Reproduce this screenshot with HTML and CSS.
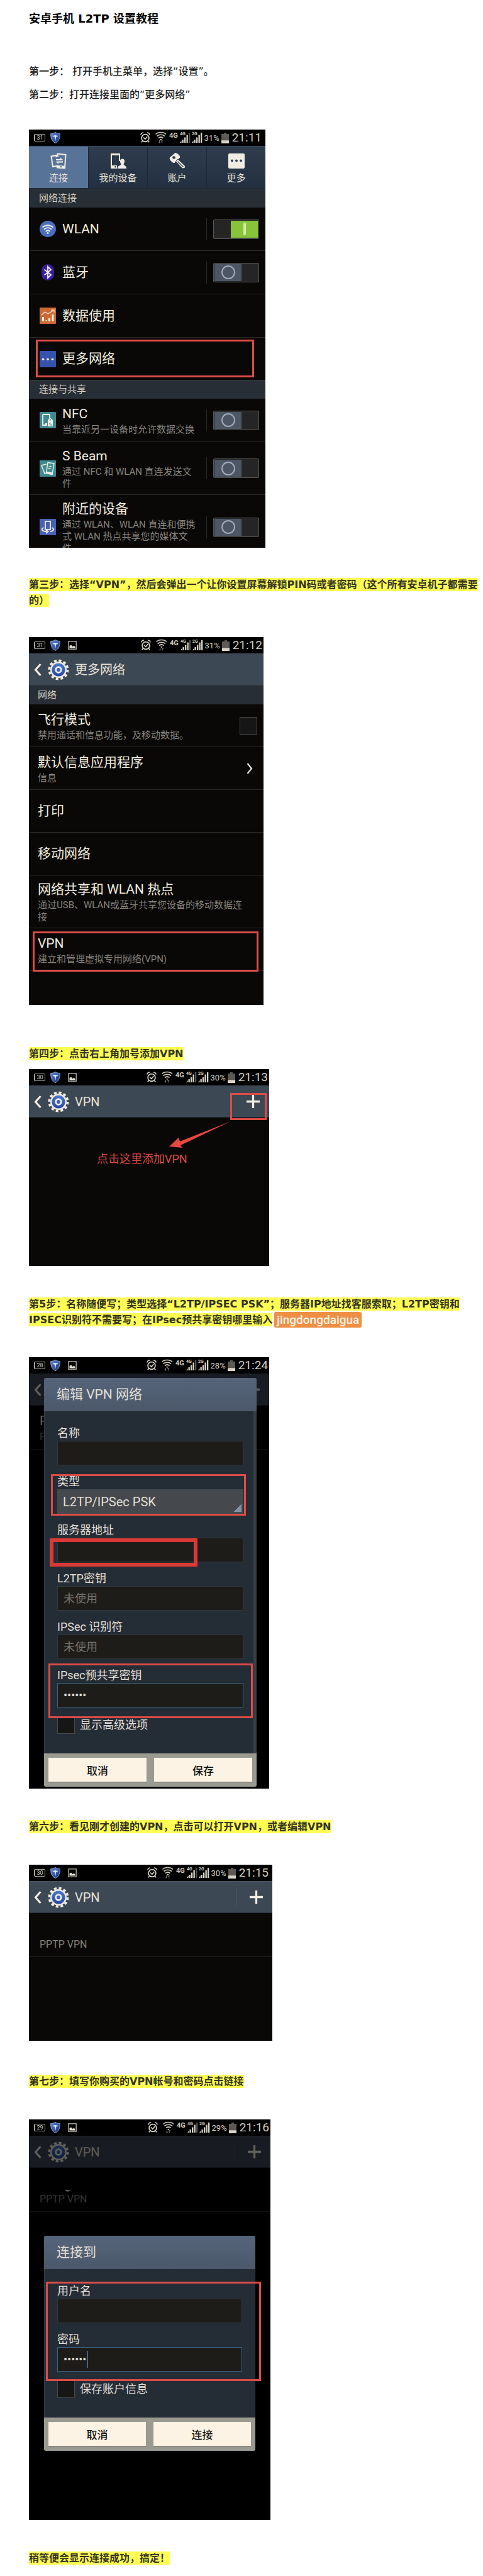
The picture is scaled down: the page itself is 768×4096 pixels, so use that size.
FILE: index.html
```html
<!DOCTYPE html>
<html lang="zh-CN">
<head>
<meta charset="utf-8">
<meta name="viewport" content="width=device-width, initial-scale=1">
<title>安卓手机 L2TP 设置教程</title>
<link rel="stylesheet" href="styles.css">
</head>
<body>
<svg class="sprite" aria-hidden="true">
  <defs>
    <linearGradient id="g-shield" x1="0" y1="0" x2="1" y2="1"><stop offset="0" stop-color="#5a86d6"/><stop offset="1" stop-color="#16307c"/></linearGradient>
    <linearGradient id="g-gear" x1="0" y1="0" x2="0" y2="1"><stop offset="0" stop-color="#4c78cc"/><stop offset="1" stop-color="#2547a4"/></linearGradient>
  </defs>
  <symbol id="i-shield" viewBox="0 0 16 18"><path d="M8 .5C5.500 2 3 2.500.7 2.500.5 9 2 14.500 8 17.500 14 14.500 15.500 9 15.300 2.500 13 2.500 10.500 2 8 .5z" fill="url(#g-shield)" stroke="#93a5c8"/><path d="M3.500 5.500c2 .8 2.500-.5 4.500-.5s2.500 1.300 4.500.5c-.6 2-2 2-3.300 1.900L8 14.500 6.800 7.400C5.500 7.500 4.100 7.500 3.500 5.500z" fill="#dfe6f2"/></symbol>
  <symbol id="i-pic" viewBox="0 0 14 14"><rect x=".8" y=".8" width="12.400" height="12.400" fill="none" stroke="#b9b5ab" stroke-width="1.300"/><path d="M2.500 11.500V8l2.500-1.500L7.500 9l2-1.200 2 1.500v2.200z" fill="#e6e1d6"/></symbol>
  <symbol id="i-radio" viewBox="0 0 101 26">
    <g fill="none" stroke="#d9d4c8" stroke-width="1.700"><circle cx="8" cy="13.500" r="5.900"/><path d="M1 8.500C1 6.500 3 5 5 5M15 8.500C15 6.500 13 5 11 5M3.500 18.200L1.800 20.300M12.500 18.200l1.700 2.100M5 12.500l2.800 2.800 3.400-4"/></g>
    <g fill="none" stroke="#cfcabf" stroke-width="1.700"><path d="M24.500 7.500C28.500 3.500 37 3.500 41 7.500M26.500 10.500C30 7.500 35.500 7.500 39 10.500M29 13.500c2.500-2 5-2 7.500 0"/></g>
    <path d="M31 15h3.500L32.700 17.500z" fill="#cfcabf"/><path d="M30.500 17v4M29 19.500l1.500 1.800 1.500-1.800M34.700 21.500v-4M33.200 18.800l1.500-1.800 1.500 1.800" fill="none" stroke="#77746e"/>
    <g fill="#d9d4c8"><path d="M63 21l2.500-3.500V21zM66.500 16h2.300v5h-2.300zM70 12.500h2.300V21H70zM73.500 8.500h2.300V21h-2.300z"/><path d="M82 21l2.500-3.500V21zM85.500 16h2.300v5h-2.300zM89 12.500h2.300V21H89zM92.500 8.500h2.300V21h-2.300zM96 5h2.300v16H96z"/></g><path d="M77 5h2.300v16H77z" fill="#55534f"/>
  </symbol>
  <symbol id="i-batt" viewBox="0 0 12 17"><path d="M4 0h4v2h4v15H0V2h4z" fill="#5d5a55"/><path d="M0 12.300h12V17H0z" fill="#d9d4c8"/></symbol>
  <symbol id="i-back" viewBox="0 0 12 20"><path d="M10.500 1L2.500 10l8 9" fill="none" stroke="#f4efe4" stroke-width="3"/></symbol>
  <symbol id="i-next" viewBox="0 0 10 18"><path d="M1.500 1L8 9l-6.500 8" fill="none" stroke="#eae5da" stroke-width="2.200"/></symbol>
  <symbol id="i-plus" viewBox="0 0 24 24"><path d="M12 1v22M1 12h22" stroke="#f4efe4" stroke-width="3.400"/></symbol>
  <symbol id="i-gear" viewBox="-17 -17 34 34"><circle r="14.700" fill="none" stroke="#f1ede2" stroke-width="3.600" stroke-dasharray="4.200 3.497"/><circle r="13" fill="#f1ede2"/><circle r="10.600" fill="url(#g-gear)"/><circle r="4.300" fill="none" stroke="#f1ede2" stroke-width="2.800"/></symbol>
  <symbol id="t-conn" viewBox="0 0 26 26"><g fill="none" stroke="#f1ede2" stroke-width="2"><path d="M9 4L1.500 5.500 4 22l6-1"/><path d="M10 7l1.500-5.500L24.500 3 23 24.500 11 23.500l-.5-4"/></g><path d="M8 3.500h5V6H8zM11 20l12 .7-.3 4L11 24z" fill="#f1ede2"/><circle cx="17" cy="22.300" r="1.200" fill="#58749a"/><path d="M9 10h7V7.500l4.500 4-4.500.5H9zM20 15.500h-7V18l-4.500-4 4.500-.5h7z" fill="#f1ede2"/></symbol>
  <symbol id="t-dev" viewBox="0 0 26 26"><path d="M1 1h15v12h-2V4H3v16h8v5H1z" fill="#f1ede2"/><circle cx="8.500" cy="22.300" r="1.200" fill="#2b3a4d"/><path d="M19.500 9.500c2.400 0 3.700 1.800 3.500 4.300-.1 1.800-.8 3-1.500 3.900.2 2.800 4.500 2 4.500 7.300H11.500c.5-2 1-3.500 3-4.500 1.800-.8 3-1.300 3-2.800-.7-.9-1.400-2.100-1.500-3.900-.2-2.500 1.100-4.300 3.500-4.300z" fill="#f1ede2"/></symbol>
  <symbol id="t-key" viewBox="0 0 26 26"><path d="M9.500.5c4 .5 6.500 3 7.500 6.500L8 16C4 14.500 1.500 12 1 8z" fill="#f1ede2" stroke="#f1ede2" stroke-linejoin="round"/><circle cx="7.500" cy="7.500" r="2.300" fill="#2b3a4d"/><path d="M10.500 13.500l3.500-3.500L25.500 21l-.5 3.500-4 .5z" fill="#f1ede2" stroke="#2b3a4d"/><path d="M13.500 13.500l9 9" stroke="#2b3a4d" stroke-width="1.200"/></symbol>
  <symbol id="t-more" viewBox="0 0 26 26"><rect x="0" y="1" width="26" height="24" rx="2" fill="#f1ede2"/><g fill="#2b3a4d"><circle cx="6" cy="12.500" r="1.900"/><circle cx="13" cy="12.500" r="1.900"/><circle cx="20" cy="12.500" r="1.900"/></g></symbol>
  <symbol id="r-wlan" viewBox="0 0 26 26"><circle cx="13" cy="13" r="13" fill="#4a6fbe"/><g fill="none" stroke="#f1ede2" stroke-width="2"><path d="M4.500 10.500c5-4.500 12-4.500 17 0M7 13.800c3.600-3.300 8.400-3.300 12 0M9.600 16.900c2.100-1.900 4.700-1.900 6.800 0"/></g><circle cx="13" cy="19.500" r="1.500" fill="#f1ede2"/></symbol>
  <symbol id="r-bt" viewBox="0 0 26 26"><rect x="3" width="20" height="26" rx="10" fill="#3a1f9e"/><path d="M7.500 8.500l10.500 8.500-5 5V4l5 5L7.500 17.500" fill="none" stroke="#f1ede2" stroke-width="1.900"/></symbol>
  <symbol id="r-data" viewBox="0 0 26 26"><rect width="26" height="26" rx="1" fill="#cc6a31"/><path d="M3 11.500L8.500 7l5 3L22 4.500M18.500 4H23v4" fill="none" stroke="#f6e5d2" stroke-width="1.300"/><path d="M4 15h3v7H4zM9.500 20h2v2h-2zM14 17h3v5h-3zM19.500 11h3v11h-3z" fill="#f9efe2"/></symbol>
  <symbol id="r-more" viewBox="0 0 26 26"><rect width="26" height="26" rx="1" fill="#3553ad"/><g fill="#f1ede2"><circle cx="5.500" cy="13.300" r="1.800"/><circle cx="13" cy="13.300" r="1.800"/><circle cx="20.500" cy="13.300" r="1.800"/></g></symbol>
  <symbol id="r-nfc" viewBox="0 0 26 26"><rect width="26" height="26" rx="1" fill="#3d8b90"/><path d="M5 4h11v6M5 4v17h7" fill="none" stroke="#f1ede2" stroke-width="1.800"/><path d="M9 18h3v4H9z" fill="#f1ede2"/><path d="M13 13l3.500-4 4.500 4v10h-8z" fill="#f1ede2"/><circle cx="17" cy="12.500" r="1" fill="#3d8b90"/><path d="M15 18c2 0 4 2 4 4M15 20.300c1 0 1.700.7 1.700 1.700" fill="none" stroke="#3d8b90"/></symbol>
  <symbol id="r-beam" viewBox="0 0 26 26"><rect width="26" height="26" rx="1" fill="#3d8b90"/><g fill="none" stroke="#f1ede2" stroke-width="1.500"><path d="M10.500 6L3 8l5 13 4-1.500"/><path d="M13 3.500l10 1.500-3 17.500-9.500-2z"/></g><path d="M11 18l9.500 1.500-.5 3-9.500-2zM14 10h5l-1.500-1.500M18.500 12.500h-5l1.500 1.500" fill="#f1ede2" stroke="#f1ede2" stroke-width=".6"/></symbol>
  <symbol id="r-near" viewBox="0 0 26 26"><rect width="26" height="26" rx="1" fill="#4762b5"/><rect x="9" y="4" width="8" height="13" fill="#4762b5" stroke="#f1ede2" stroke-width="1.800"/><path d="M6.500 14C3 15.500 3 17.500 5 18.800c2 1 4 1.400 6 1.500M10 17.500l3.500 2.800-3.500 2.700M19.500 14c3.500 1.500 3.500 3.500 1.500 4.800-1 .7-2.500 1.100-4 1.300" fill="none" stroke="#f1ede2" stroke-width="1.900"/></symbol>
</svg>

<main class="doc">
  <h1 class="doc-title">安卓手机 L2TP 设置教程</h1>
  <p class="step plain">第一步： 打开手机主菜单，选择“设置”。</p>
  <p class="step plain next-line">第二步：打开连接里面的“更多网络”</p>

  <section class="phone phone-settings" aria-label="设置">
    <div class="status status-short">
      <span class="badge">31</span><svg class="shield"><use href="#i-shield"/></svg>
      <svg class="radio" viewBox="0 0 101 26"><use href="#i-radio"/><text x="46" y="13" class="net">4G</text><text x="63" y="9" class="net net-s">4G</text><text x="82" y="9" class="net net-s">2G</text></svg><span class="pct">31%</span><svg class="batt"><use href="#i-batt"/></svg><span class="time">21:11</span>
    </div>
    <nav class="tabs">
      <button class="tab tab-on"><svg><use href="#t-conn"/></svg>连接</button>
      <button class="tab"><svg><use href="#t-dev"/></svg>我的设备</button>
      <button class="tab"><svg><use href="#t-key"/></svg>账户</button>
      <button class="tab"><svg><use href="#t-more"/></svg>更多</button>
    </nav>
    <h2 class="group">网络连接</h2>
    <div class="row"><svg class="ico"><use href="#r-wlan"/></svg><div class="txt"><b>WLAN</b></div><button class="switch on" role="switch" aria-checked="true" aria-label="WLAN"><i></i></button></div>
    <div class="row"><svg class="ico"><use href="#r-bt"/></svg><div class="txt"><b>蓝牙</b></div><button class="switch" role="switch" aria-checked="false" aria-label="蓝牙"><i></i></button></div>
    <div class="row"><svg class="ico"><use href="#r-data"/></svg><div class="txt"><b>数据使用</b></div></div>
    <div class="row row-last"><svg class="ico"><use href="#r-more"/></svg><div class="txt"><b>更多网络</b></div><span class="mark mark-more"></span></div>
    <h2 class="group">连接与共享</h2>
    <div class="row"><svg class="ico"><use href="#r-nfc"/></svg><div class="txt"><b>NFC</b><small>当靠近另一设备时允许数据交换</small></div><button class="switch" role="switch" aria-checked="false" aria-label="NFC"><i></i></button></div>
    <div class="row"><svg class="ico"><use href="#r-beam"/></svg><div class="txt"><b>S Beam</b><small>通过 NFC 和 WLAN 直连发送文件</small></div><button class="switch" role="switch" aria-checked="false" aria-label="S Beam"><i></i></button></div>
    <div class="cut"><div class="row"><svg class="ico"><use href="#r-near"/></svg><div class="txt"><b>附近的设备</b><small>通过 WLAN、WLAN 直连和便携式 WLAN 热点共享您的媒体文件</small></div><button class="switch" role="switch" aria-checked="false" aria-label="附近的设备"><i></i></button></div></div>
  </section>

  <p class="step"><mark>第三步：选择“VPN”，然后会弹出一个让你设置屏幕解锁PIN码或者密码（这个所有安卓机子都需要的）</mark></p>

  <section class="phone phone-more" aria-label="更多网络">
    <div class="status">
      <span class="badge">31</span><svg class="shield"><use href="#i-shield"/></svg><svg class="pic"><use href="#i-pic"/></svg>
      <svg class="radio" viewBox="0 0 101 26"><use href="#i-radio"/><text x="46" y="13" class="net">4G</text><text x="63" y="9" class="net net-s">4G</text><text x="82" y="9" class="net net-s">2G</text></svg><span class="pct">31%</span><svg class="batt"><use href="#i-batt"/></svg><span class="time">21:12</span>
    </div>
    <header class="bar"><svg class="back"><use href="#i-back"/></svg><svg class="gear"><use href="#i-gear"/></svg><h2>更多网络</h2></header>
    <h3 class="group">网络</h3>
    <label class="row"><span class="txt"><b>飞行模式</b><small>禁用通话和信息功能，及移动数据。</small></span><input type="checkbox" class="check"></label>
    <div class="row"><div class="txt"><b>默认信息应用程序</b><small>信息</small></div><svg class="next"><use href="#i-next"/></svg></div>
    <div class="row"><div class="txt"><b>打印</b></div></div>
    <div class="row"><div class="txt"><b>移动网络</b></div></div>
    <div class="row"><div class="txt wrap"><b>网络共享和 WLAN 热点</b><small>通过USB、WLAN或蓝牙共享您设备的移动数据连接</small></div></div>
    <div class="row"><div class="txt"><b>VPN</b><small>建立和管理虚拟专用网络(VPN)</small></div><span class="mark mark-vpn"></span></div>
  </section>

  <p class="step far"><mark>第四步：点击右上角加号添加VPN</mark></p>

  <section class="phone phone-add" aria-label="添加 VPN">
    <div class="status">
      <span class="badge">30</span><svg class="shield"><use href="#i-shield"/></svg><svg class="pic"><use href="#i-pic"/></svg>
      <svg class="radio" viewBox="0 0 101 26"><use href="#i-radio"/><text x="46" y="13" class="net">4G</text><text x="63" y="9" class="net net-s">4G</text><text x="82" y="9" class="net net-s">2G</text></svg><span class="pct">30%</span><svg class="batt"><use href="#i-batt"/></svg><span class="time">21:13</span>
    </div>
    <header class="bar"><svg class="back"><use href="#i-back"/></svg><svg class="gear"><use href="#i-gear"/></svg><h2>VPN</h2><button class="add" aria-label="添加"><svg><use href="#i-plus"/></svg></button><span class="mark mark-plus"></span></header>
    <div class="hint"><svg class="arrow" viewBox="0 0 100 44"><path d="M99 2L18 34l-2-6L1 42l21 2-3-4z" fill="#e8483f"/></svg><p>点击这里添加VPN</p></div>
  </section>

  <p class="step"><mark>第5步：名称随便写；类型选择“L2TP/IPSEC PSK”；服务器IP地址找客服索取；L2TP密钥和IPSEC识别符不需要写；在IPsec预共享密钥哪里输入</mark><span class="secret">jingdongdaigua</span></p>

  <section class="phone phone-edit" aria-label="编辑 VPN 网络">
    <div class="status">
      <span class="badge">28</span><svg class="shield"><use href="#i-shield"/></svg><svg class="pic"><use href="#i-pic"/></svg>
      <svg class="radio" viewBox="0 0 101 26"><use href="#i-radio"/><text x="46" y="13" class="net">4G</text><text x="63" y="9" class="net net-s">4G</text><text x="82" y="9" class="net net-s">2G</text></svg><span class="pct">28%</span><svg class="batt"><use href="#i-batt"/></svg><span class="time">21:24</span>
    </div>
    <div class="stack">
      <div class="under">
        <header class="bar"><svg class="back"><use href="#i-back"/></svg><button class="add" aria-label="添加"><svg><use href="#i-plus"/></svg></button></header>
        <div class="row row-vpn"><div class="txt"><b>P</b><small>P</small></div></div>
      </div>
      <form class="dialog">
        <h2>编辑 VPN 网络</h2>
        <div class="fields scroll">
          <div class="field"><label for="name">名称</label><input id="name" type="text"></div>
          <div class="field"><label for="type">类型</label><select id="type"><option>L2TP/IPSec PSK</option></select><span class="mark mark-type"></span></div>
          <div class="field"><label for="server">服务器地址</label><input id="server" type="text"><span class="mark mark-server"></span></div>
          <div class="field"><label for="l2tp">L2TP密钥</label><input id="l2tp" type="text" placeholder="未使用"></div>
          <div class="field"><label for="ident">IPSec 识别符</label><input id="ident" type="text" placeholder="未使用"></div>
          <div class="field"><label for="psk">IPsec预共享密钥</label><input id="psk" class="active" type="password" value="123456"><span class="mark mark-psk"></span></div>
          <label class="option"><input type="checkbox" class="check">显示高级选项</label>
        </div>
        <footer><button type="button">取消</button><button type="button">保存</button></footer>
      </form>
    </div>
  </section>

  <p class="step"><mark>第六步：看见刚才创建的VPN，点击可以打开VPN，或者编辑VPN</mark></p>

  <section class="phone phone-list" aria-label="VPN 列表">
    <div class="status status-short">
      <span class="badge">30</span><svg class="shield"><use href="#i-shield"/></svg><svg class="pic"><use href="#i-pic"/></svg>
      <svg class="radio" viewBox="0 0 101 26"><use href="#i-radio"/><text x="46" y="13" class="net">4G</text><text x="63" y="9" class="net net-s">4G</text><text x="82" y="9" class="net net-s">2G</text></svg><span class="pct">30%</span><svg class="batt"><use href="#i-batt"/></svg><span class="time">21:15</span>
    </div>
    <header class="bar"><svg class="back"><use href="#i-back"/></svg><svg class="gear"><use href="#i-gear"/></svg><h2>VPN</h2><button class="add split" aria-label="添加"><svg><use href="#i-plus"/></svg></button></header>
    <div class="row row-vpn"><div class="txt"><b></b><small>PPTP VPN</small></div></div>
  </section>

  <p class="step"><mark>第七步：填写你购买的VPN帐号和密码点击链接</mark></p>

  <section class="phone phone-login" aria-label="连接到">
    <div class="status">
      <span class="badge">29</span><svg class="shield"><use href="#i-shield"/></svg><svg class="pic"><use href="#i-pic"/></svg>
      <svg class="radio" viewBox="0 0 101 26"><use href="#i-radio"/><text x="46" y="13" class="net">4G</text><text x="63" y="9" class="net net-s">4G</text><text x="82" y="9" class="net net-s">2G</text></svg><span class="pct">29%</span><svg class="batt"><use href="#i-batt"/></svg><span class="time">21:16</span>
    </div>
    <div class="under">
      <header class="bar"><svg class="back"><use href="#i-back"/></svg><svg class="gear"><use href="#i-gear"/></svg><h2>VPN</h2><button class="add split" aria-label="添加"><svg><use href="#i-plus"/></svg></button></header>
      <div class="row row-vpn"><div class="txt"><b><svg class="tick" viewBox="0 0 9 3"><path d="M0 0h9C7 3.500 2 3.500 0 0z" fill="#e4dfd4"/></svg></b><small>PPTP VPN</small></div></div>
    </div>
    <form class="dialog">
      <h2>连接到</h2>
      <div class="fields">
        <div class="pair">
          <div class="field"><label for="user">用户名</label><input id="user" type="text"></div>
          <div class="field"><label for="pass">密码</label><input id="pass" class="active" type="password" value="123456"><span class="caret"></span></div>
          <span class="mark mark-pair"></span>
        </div>
        <label class="option"><input type="checkbox" class="check">保存账户信息</label>
      </div>
      <footer><button type="button">取消</button><button type="button">连接</button></footer>
    </form>
  </section>

  <p class="step"><mark>稍等便会显示连接成功，搞定！</mark></p>
</main>
</body>
</html>
```

FILE: styles.css
```css
* { box-sizing: border-box; }
body { margin: 0; background: #fff; }
h1, h2, h3, p { margin: 0; font-weight: 400; }
button, input, select { font: inherit; color: inherit; margin: 0; border: 0; border-radius: 0; padding: 0; background: none; }
.sprite { display: block; width: 0; height: 0; }

/* Document text */
.doc { padding: 17px 8px 16px 46px; font-family: "DejaVu Sans", "Noto Sans CJK SC", sans-serif; }
.doc-title { font-size: 18px; line-height: 26px; font-weight: 700; color: #000; margin-bottom: 58px; }
.step { font-size: 16px; line-height: 25px; font-weight: 700; color: #333; }
.step.plain { font-weight: 500; color: #1c1c1c; }
.step.next-line { margin-top: 12px; }
.step mark { background: #ffff54; color: #333322; padding: 1px 0; }
.phone + .step { margin-top: 48px; }
.phone-settings + .step { margin-top: 46px; }
.phone + .step.far { margin-top: 65px; }
.phone-list + .step { margin-top: 52px; }
.secret { display: inline-block; vertical-align: bottom; margin-left: 3px; padding: 0 4px; border-radius: 3px; background: #ee8f46; color: #fdf3e6; font: 500 19px/25px Roboto, sans-serif; }

/* Phone shell */
.phone { margin-top: 48px; background: #0a0807; color: #e6e1d6; font-family: Roboto, "Noto Sans CJK SC", sans-serif; font-size: 15px; overflow: hidden; }
.phone-settings { max-width: 376px; margin-top: 43px; }
.phone-more { max-width: 373px; margin-top: 46px; padding-bottom: 54px; }
.phone-add { max-width: 382px; margin-top: 12px; }
.phone-edit { max-width: 382px; margin-top: 47px; }
.phone-list { max-width: 387px; padding-bottom: 133px; }
.phone-login { max-width: 384px; padding-bottom: 110px; }
.phone-edit, .phone-login { background: #000; }

.status { display: flex; align-items: center; height: 26px; padding: 0 2px 0 8px; background: #000; color: #d3cec3; }
.status-short { padding-right: 6px; }
.badge { width: 18px; height: 12px; margin-right: 8px; border: 1px solid #aaa69d; border-left-width: 2px; border-radius: 2px; font-size: 9px; line-height: 10px; text-align: center; }
.shield { width: 16px; height: 18px; }
.pic { width: 14px; height: 14px; margin-left: 12px; }
.radio { width: 101px; height: 26px; margin-left: auto; }
.net { font: 700 11px Roboto, sans-serif; fill: #cfcabf; }
.net-s { font-size: 7px; }
.pct { font-size: 13px; margin-left: 1px; }
.batt { width: 12px; height: 17px; margin: 0 5px 0 3px; }
.time { font-size: 19px; line-height: 26px; }

.bar { position: relative; display: flex; align-items: center; height: 51px; padding: 0 14px 0 8px; background: #3d4855; border-top: 1px solid #4b5663; border-bottom: 1px solid #28303a; }
.back { width: 12px; height: 20px; margin-right: 10px; }
.gear { width: 34px; height: 34px; margin-right: 9px; }
.bar h2 { font-size: 20px; line-height: 30px; }
.add { display: flex; align-items: center; justify-content: flex-end; margin-left: auto; width: 43px; height: 30px; }
.add svg { width: 23px; height: 23px; }
.split { border-left: 1px solid #4d5865; }

/* Settings list */
.tabs { display: grid; grid-template-columns: repeat(4, 1fr); border-top: 1px solid #3f4f62; border-bottom: 1px solid #1d262f; background: linear-gradient(#2e3c4e, #223041); }
.tab { display: flex; flex-direction: column; align-items: center; gap: 4px; padding: 10px 0 6px; line-height: 20px; border-left: 1px solid #1d2836; }
.tab-on { background: #587398; border-left: 0; }
.tab svg { width: 26px; height: 26px; }
.group { font-size: 15px; line-height: 29px; padding: 0 16px; background: #272e35; color: #d4cfc4; border-top: 1px solid #323a42; }
.row { position: relative; display: flex; align-items: center; min-height: 69px; padding: 7px 10px 7px 17px; border-bottom: 1px solid #2b2a29; }
.row-last { border-bottom: 0; min-height: 67px; }
.phone-more .row { padding-left: 14px; min-height: 68px; }
.phone-more .group { padding: 0 14px; }
.ico { width: 26px; height: 26px; margin-right: 10px; flex: none; }
.txt { flex: 1; display: flex; flex-direction: column; }
.txt b { font-size: 21px; line-height: 31px; min-height: 31px; font-weight: 400; color: #f0ebdf; }
.txt small { font-size: 15px; line-height: 19px; color: #86837d; padding-right: 8px; }
.txt.wrap { padding-right: 12px; }
.cut { max-height: 84px; overflow: hidden; }
.switch { position: relative; flex: none; display: flex; width: 73px; height: 31px; margin-left: 20px; padding: 1px; border: 1px solid #5a5856; border-radius: 2px; background: #262525; }
.switch::before { content: ""; position: absolute; left: -12px; top: -3px; width: 1px; height: 35px; background: #2b2a29; }
.switch i { display: grid; place-items: center; width: 43px; background: #4c5665; }
.switch i::before { content: ""; width: 18px; height: 18px; border: 2px solid #a3aab6; border-radius: 50%; }
.switch.on { justify-content: flex-end; }
.switch.on i { background: #87c43c; }
.switch.on i::before { width: 4px; height: 20px; border: 0; border-radius: 2px; background: #d3eda0; }
.check { appearance: none; flex: none; width: 28px; height: 28px; background: #171616; border: 1px solid #4b4a48; }
.next { width: 10px; height: 18px; margin-right: 7px; }
.row-vpn { min-height: 70px; }
.row-vpn .txt small { font-size: 16px; line-height: 20px; }

/* Red annotations laid over the screens */
.mark { position: absolute; border: 3px solid #dd4c46; pointer-events: none; }
.mark-more { inset: 3px 18px 4px 11px; }
.mark-vpn { inset: 5px 8px -2px 6px; }
.mark-plus { top: 11px; right: 4px; bottom: -5px; width: 58px; }
.mark-type { inset: 1px -4px -3px -10px; }
.mark-server { inset: 26px 73px -7px -12px; border: 6px solid #d93a35; }
.mark-psk { inset: -6px -15px -17px -14px; }
.mark-pair { inset: -2px -30px -15px -18px; }
.phone-add .bar { z-index: 1; }
.hint { padding: 4px 0 156px 108px; color: #dc4840; font-size: 18px; line-height: 28px; }
.arrow { display: block; width: 100px; height: 44px; margin: 0 0 4px 114px; }

/* Dialogs */
.stack { display: grid; }
.stack > * { grid-area: 1 / 1; }
.under > * { opacity: 0.4; }
.stack .dialog { z-index: 1; margin: 7px 20px 3px 24px; }
.dialog { position: relative; margin: 38px 24px 0; border-radius: 3px; background: #242c36; color: #e3dfd5; font-size: 18px; }
.dialog h2 { padding: 0 20px; font-size: 21px; line-height: 53px; border-radius: 3px 3px 0 0; background: linear-gradient(#56647b, #4b586a); }
.fields { display: flex; flex-direction: column; gap: 13px; padding: 22px 20px 31px; border: 1px solid #353d47; border-width: 0 1px; }
.scroll { box-shadow: inset -4px 0 #383f48; }
.field { position: relative; display: flex; flex-direction: column; }
.field label { line-height: 25px; }
.field input, .field select { appearance: none; width: 100%; height: 39px; padding: 0 9px; background: #1e1c19; border: 1px solid #34383b; }
.field input::placeholder { color: #77746e; opacity: 1; }
.field select { background: linear-gradient(135deg, transparent 50%, #8391a0 50%) right 3px bottom 3px / 12px 12px no-repeat, #45494d; border: 0; font-size: 20px; }
.field .active { border-color: #3c6380; }
.pair { position: relative; display: flex; flex-direction: column; gap: 13px; }
.caret { position: absolute; left: 47px; bottom: 6px; width: 2px; height: 27px; background: #3f6484; }
.option { display: flex; align-items: center; gap: 8px; margin-top: 1px; line-height: 28px; }
.dialog footer { display: grid; grid-template-columns: 1fr 1fr; gap: 12px; padding: 7px 7px 8px; background: #9b9a91; border-radius: 0 0 3px 3px; }
.dialog footer button { height: 38px; background: #fdf3e4; color: #151311; font-size: 17px; font-weight: 500; box-shadow: 0 1px 1px #77766e; }
.tick { display: block; width: 9px; height: 3px; margin: 26px 0 0 40px; }
```
